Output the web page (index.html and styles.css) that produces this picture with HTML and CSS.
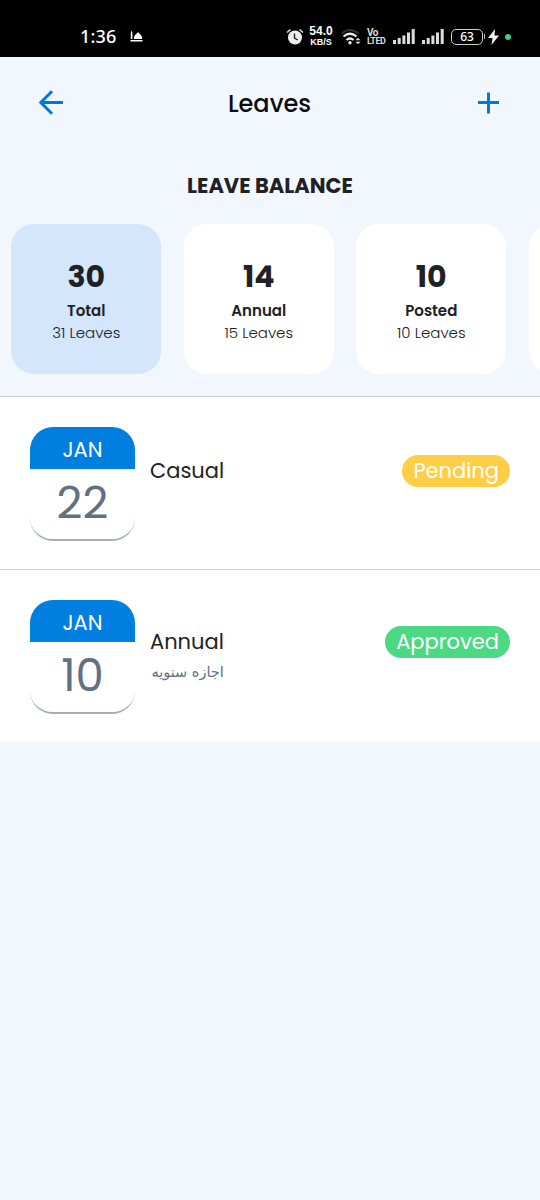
FILE: index.html
```html
<!DOCTYPE html>
<html lang="en">
<head>
  <meta charset="UTF-8">
  <meta name="viewport" content="width=device-width, initial-scale=1.0">
  <title>Leaves</title>
  <link rel="stylesheet" href="styles.css">
</head>
<body>
  <!-- Status bar -->
  <div class="status-bar">
    <span class="clock">1:36</span>
    <svg class="mosque" width="13" height="13" viewBox="0 0 13 13" fill="#fff">
      <path d="M.8 9V3l.8-2.500.8 2.500v6zM4 9V7.300C4 5.300 6.300 4.300 8 2.300c1.700 2 4 3 4 5V9zM.5 10h12v1.500H.5z"/>
    </svg>
    <div class="status-icons">
      <svg class="alarm" width="18" height="18" viewBox="0 0 18 18">
        <circle cx="9" cy="9.500" r="7" fill="#eee"/>
        <path d="M1 4.500L4.500 1.500M17 4.500L13.500 1.500" stroke="#ddd" stroke-width="1.600"/>
        <path d="M8.500 5.500v4.500l3.200 2" fill="none" stroke="#222" stroke-width="1.400"/>
      </svg>
      <div class="speed"><span class="speed-value">54.0</span><span class="speed-unit">KB/S</span></div>
      <svg class="wifi" width="20" height="18" viewBox="0 0 20 18" fill="none">
        <path d="M.8 5.500Q9 -1.500 17.200 5.500" stroke="#333" stroke-width="2"/>
        <path d="M2.500 8.500Q9 3 15.500 8.500M5.500 12Q9 9 12.500 12" stroke="#eee" stroke-width="2.200"/>
        <circle cx="9" cy="14.800" r="1.700" fill="#eee"/>
        <path d="M14.500 12.300L17 9.800l2.500 2.500zM14.500 13.800h5L17 16.300z" fill="#ddd"/>
      </svg>
      <div class="volte"><span>Vo</span><span class="lte">LTED</span></div>
      <svg class="signal" width="22" height="17" viewBox="0 0 22 17" fill="#ddd">
        <path d="M0 12h3v4H0zM4.700 10h3v6h-3zM9.400 7.500h3V16h-3zM14 4.500h3V16h-3zM18.700 1h3v15h-3z"/>
      </svg>
      <svg class="signal" width="22" height="17" viewBox="0 0 22 17" fill="#ddd">
        <path d="M0 12h3v4H0zM4.700 10h3v6h-3zM9.400 7.500h3V16h-3zM14 4.500h3V16h-3zM18.700 1h3v15h-3z"/>
      </svg>
      <div class="battery">63</div>
      <span class="battery-tip"></span>
      <svg class="bolt" width="11" height="16" viewBox="0 0 11 16" fill="#eee">
        <path d="M7 0L0 9h4.500l-1 7L11 6.500H6.500z"/>
      </svg>
      <span class="dot"></span>
    </div>
  </div>

  <header class="header">
    <svg width="26" height="26" viewBox="0 0 26 26" fill="none" stroke="#007ad1" stroke-width="3">
      <path d="M25 12.500H3M14 1.300L2.800 12.500 14 23.700"/>
    </svg>
    <h1>Leaves</h1>
    <svg width="22" height="22" viewBox="0 0 22 22" fill="none" stroke="#007ad9" stroke-width="3">
      <path d="M11.500 .5v21M1 10.500h21"/>
    </svg>
  </header>

  <h2>LEAVE BALANCE</h2>

  <div class="cards">
    <div class="card active">
      <span class="number">30</span>
      <span class="type">Total</span>
      <span class="total">31 Leaves</span>
    </div>
    <div class="card">
      <span class="number">14</span>
      <span class="type">Annual</span>
      <span class="total">15 Leaves</span>
    </div>
    <div class="card">
      <span class="number">10</span>
      <span class="type">Posted</span>
      <span class="total">10 Leaves</span>
    </div>
    <div class="card"></div>
  </div>

  <!-- Leave requests -->
  <div class="leave">
    <div class="date">
      <span class="month">JAN</span>
      <span class="day">22</span>
    </div>
    <div class="info">
      <span class="name">Casual</span>
    </div>
    <span class="badge pending">Pending</span>
  </div>
  <div class="leave with-note">
    <div class="date">
      <span class="month">JAN</span>
      <span class="day">10</span>
    </div>
    <div class="info">
      <span class="name">Annual</span>
      <span class="note" lang="ar" dir="rtl">اجازه سنويه</span>
    </div>
    <span class="badge approved">Approved</span>
  </div>
</body>
</html>
```
FILE: styles.css
```css
* {
  box-sizing: border-box;
}

body {
  margin: 0;
  min-height: 1200px;
  background-color: #f2f7fe;
  font-family: Poppins, Inter, sans-serif;
  color: #202124;
  overflow-x: hidden;
}

svg {
  display: block;
  flex-shrink: 0;
}

/* Status bar */
.status-bar {
  display: flex;
  align-items: center;
  height: 57px;
  padding: 16px 29px 0 80px;
  background-color: #000;
  color: #fff;
  font-family: "Noto Sans", sans-serif;
}

.clock {
  width: 50px;
  padding-bottom: 2px;
  font-size: 18px;
  font-weight: 500;
  letter-spacing: 0.2px;
}

.status-icons {
  display: flex;
  align-items: center;
  margin-left: auto;
}

.speed {
  display: flex;
  flex-direction: column;
  align-items: center;
  width: 28px;
  margin-left: 3px;
  font-family: "Liberation Sans", sans-serif;
  font-weight: 700;
}

.speed-value {
  font-size: 12px;
  line-height: 11px;
}

.speed-unit {
  font-size: 9px;
  line-height: 10px;
}

.wifi {
  margin-left: 6px;
}

.volte {
  display: flex;
  flex-direction: column;
  width: 19px;
  margin-left: 6px;
  font-family: Roboto, sans-serif;
  font-size: 10px;
  font-weight: 700;
  line-height: 8px;
  letter-spacing: -0.5px;
  color: #ddd;
}

.lte {
  font-size: 9px;
}

.signal {
  margin-left: 7px;
}

.battery {
  width: 32px;
  height: 16px;
  margin-left: 7px;
  border: 1.5px solid #ccc;
  border-radius: 5px;
  font-size: 12px;
  font-weight: 500;
  line-height: 14px;
  text-align: center;
}

.battery-tip {
  width: 1px;
  height: 5px;
  margin-left: 1px;
  background-color: #bbb;
}

.bolt {
  margin-left: 3px;
}

.dot {
  width: 6px;
  height: 6px;
  margin-left: 6px;
  border-radius: 50%;
  background-color: #3cd080;
}

/* Header */
.header {
  display: flex;
  justify-content: space-between;
  align-items: center;
  height: 91px;
  padding: 0 41px 0 38px;
}

h1 {
  margin: 0;
  padding: 1px 2px 0 0;
  font-size: 24px;
  font-weight: 500;
  color: #0b0d10;
}

h2 {
  height: 76px;
  margin: 0;
  font-size: 21px;
  font-weight: 700;
  line-height: 75px;
  text-align: center;
}

/* Balance cards */
.cards {
  display: flex;
  gap: 22.5px;
  height: 173px;
  padding-left: 11.25px;
  border-bottom: 1px solid #cfd2d5;
  overflow: hidden;
}

.card {
  display: flex;
  flex-direction: column;
  align-items: center;
  flex: 0 0 150px;
  height: 150px;
  padding-top: 33px;
  border-radius: 23px;
  background-color: #fff;
}

.card.active {
  background-color: #d4e6fc;
}

.number {
  font-size: 30px;
  font-weight: 700;
  line-height: 40px;
}

.type {
  font-size: 15px;
  font-weight: 600;
  line-height: 27px;
}

.total {
  font-size: 15px;
  font-weight: 300;
  line-height: 18px;
}

/* Leave rows */
.leave {
  display: flex;
  height: 172px;
  padding: 30px 30px 0;
  background-color: #fff;
}

.leave + .leave {
  height: 173px;
  border-top: 1px solid #cfd2d5;
}

.date {
  display: flex;
  flex-direction: column;
  width: 105px;
  height: 114px;
  border-bottom: 2px solid #a5adb0;
  border-radius: 23px;
  overflow: hidden;
  text-align: center;
}

.month {
  height: 42px;
  background-color: #007fe0;
  color: #fff;
  font-size: 21px;
  line-height: 45px;
}

.day {
  color: #617082;
  font-size: 45px;
  line-height: 68px;
}

.info {
  display: flex;
  flex-direction: column;
  margin-left: 15px;
  padding-top: 29px;
}

.name {
  font-size: 21px;
  line-height: 30px;
}

.note {
  font-family: "DejaVu Sans", sans-serif;
  font-size: 14.5px;
  line-height: 30px;
  color: #617082;
}

.badge {
  height: 32px;
  margin: 28px 0 0 auto;
  padding: 0 11px;
  border-radius: 16px;
  color: #fff;
  font-size: 21px;
  line-height: 31px;
}

/* Rows with a note sit slightly higher */
.with-note .info {
  padding-top: 27px;
}

.with-note .badge {
  margin-top: 26px;
}

.pending {
  background-color: #ffce47;
}

.approved {
  background-color: #4bd984;
}
```
